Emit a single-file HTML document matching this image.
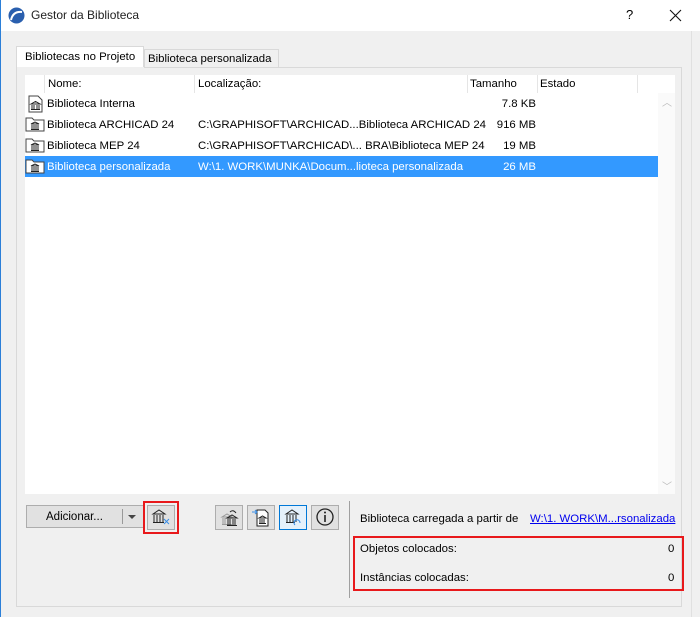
<!DOCTYPE html>
<html><head><style>
*{margin:0;padding:0;box-sizing:border-box}
body{width:700px;height:617px;background:#f0f0f0;font-family:"Liberation Sans",sans-serif;font-size:11.4px;color:#000;position:relative;overflow:hidden}
.a{position:absolute}
.t{white-space:nowrap}
.r{text-align:right;width:60px}
</style></head><body>
<div class="a" style="left:0;top:0;width:700px;height:31px;background:#fff"></div>
<div class="a" style="left:0;top:0;width:1px;height:617px;background:#2b7fd8"></div>
<svg class="a" style="left:8px;top:7px" width="17" height="17" viewBox="0 0 17 17"><circle cx="8.5" cy="8.5" r="8" fill="#2a5fae"/><path d="M3 13 Q5 4 14 5" stroke="#fff" stroke-width="2" fill="none"/></svg>
<div class="a t" style="left:31px;top:8px;font-size:12px;color:#222">Gestor da Biblioteca</div>
<div class="a t" style="left:626px;top:7px;font-size:13px">?</div>
<svg class="a" style="left:669px;top:9px" width="13" height="13" viewBox="0 0 13 13"><path d="M1 1l11 11M12 1L1 12" stroke="#111" stroke-width="1.1"/></svg>

<!-- tabs -->
<div class="a" style="left:16px;top:46px;width:128px;height:22px;background:#fff;border:1px solid #d9d9d9;border-bottom:none"></div>
<div class="a t" style="left:25px;top:51px">Bibliotecas no Projeto</div>
<div class="a" style="left:144px;top:49px;width:135px;height:19px;background:#f0f0f0;border:1px solid #d9d9d9;border-bottom:none"></div>
<div class="a t" style="left:148px;top:53px">Biblioteca personalizada</div>
<div class="a" style="left:16px;top:67px;width:666px;height:540px;border:1px solid #d9d9d9;border-top:none;background:#f0f0f0"></div>
<div class="a" style="left:144px;top:67px;width:538px;height:1px;background:#d9d9d9"></div>

<!-- list -->
<div class="a" style="left:25px;top:75px;width:650px;height:419px;background:#fff"></div>
<div class="a" style="left:658px;top:93px;width:17px;height:401px;background:#fafafa"></div>
<div class="a t" style="left:662px;top:94px;color:#bbb;font-size:10px">︿</div>
<div class="a t" style="left:662px;top:478px;color:#bbb;font-size:10px">﹀</div>
<div class="a" style="left:44px;top:75px;width:1px;height:18px;background:#e5e5e5"></div>
<div class="a" style="left:194px;top:75px;width:1px;height:18px;background:#e5e5e5"></div>
<div class="a" style="left:467px;top:75px;width:1px;height:18px;background:#e5e5e5"></div>
<div class="a" style="left:537px;top:75px;width:1px;height:18px;background:#e5e5e5"></div>
<div class="a" style="left:637px;top:75px;width:1px;height:18px;background:#e5e5e5"></div>
<div class="a t" style="left:48px;top:78px">Nome:</div>
<div class="a t" style="left:198px;top:78px">Localização:</div>
<div class="a t" style="left:470px;top:78px">Tamanho</div>
<div class="a t" style="left:540px;top:78px">Estado</div>

<div class="a" style="left:25px;top:156px;width:633px;height:21px;background:#3399ff"></div>

<svg class="a" style="left:28px;top:95px" width="15" height="18" viewBox="0 0 15 18"><path d="M1 1h9l4 4v12H1z" fill="#fff" stroke="#444"/><path d="M3 9l4.5-2.5L12 9zM4 10v4M6 10v4M9 10v4M11 10v4M3 14.5h9" stroke="#222" fill="none"/></svg>
<svg class="a" style="left:25px;top:117px" width="20" height="15" viewBox="0 0 20 15"><path d="M1 1h6l2 2h10v11H1z" fill="#fff" stroke="#444"/><path d="M6 7l4-2 4 2zM7 8v4M9 8v4M11 8v4M13 8v4M6 12.5h8" stroke="#222" fill="none"/></svg>
<svg class="a" style="left:25px;top:138px" width="20" height="15" viewBox="0 0 20 15"><path d="M1 1h6l2 2h10v11H1z" fill="#fff" stroke="#444"/><path d="M6 7l4-2 4 2zM7 8v4M9 8v4M11 8v4M13 8v4M6 12.5h8" stroke="#222" fill="none"/></svg>
<svg class="a" style="left:25px;top:159px" width="20" height="15" viewBox="0 0 20 15"><path d="M1 1h6l2 2h10v11H1z" fill="#fff" stroke="#444"/><path d="M6 7l4-2 4 2zM7 8v4M9 8v4M11 8v4M13 8v4M6 12.5h8" stroke="#222" fill="none"/></svg>

<div class="a t" style="left:47px;top:98px">Biblioteca Interna</div>
<div class="a t r" style="left:476px;top:98px">7.8 KB</div>
<div class="a t" style="left:47px;top:119px">Biblioteca ARCHICAD 24</div>
<div class="a t" style="left:198px;top:119px">C:\GRAPHISOFT\ARCHICAD...Biblioteca ARCHICAD 24</div>
<div class="a t r" style="left:476px;top:119px">916 MB</div>
<div class="a t" style="left:47px;top:140px">Biblioteca MEP 24</div>
<div class="a t" style="left:198px;top:140px">C:\GRAPHISOFT\ARCHICAD\... BRA\Biblioteca MEP 24</div>
<div class="a t r" style="left:476px;top:140px">19 MB</div>
<div class="a t" style="left:47px;top:161px;color:#fff">Biblioteca personalizada</div>
<div class="a t" style="left:198px;top:161px;color:#fff">W:\1. WORK\MUNKA\Docum...lioteca personalizada</div>
<div class="a t r" style="left:476px;top:161px;color:#fff">26 MB</div>

<!-- bottom buttons -->
<div class="a" style="left:26px;top:505px;width:118px;height:23px;background:#e1e1e1;border:1px solid #adadad"></div>
<div class="a t" style="left:46px;top:511px;font-size:11.5px">Adicionar...</div>
<div class="a" style="left:122px;top:509px;width:1px;height:15px;background:#999"></div>
<div class="a" style="left:128px;top:515px;width:0;height:0;border-left:4px solid transparent;border-right:4px solid transparent;border-top:4px solid #444"></div>

<div class="a" style="left:143px;top:501px;width:36px;height:33px;border:2px solid #e8191b"></div>
<div class="a" style="left:147px;top:505px;width:28px;height:25px;background:#e1e1e1;border:1px solid #adadad"></div>
<svg class="a" style="left:151px;top:508px" width="20" height="18" viewBox="0 0 20 18"><path d="M2 6l6-4 6 4zM3 7v7M6 7v7M9 7v7M12 7v7M2 14.5h11" stroke="#222" fill="none"/><path d="M13 11l5 5M18 11l-5 5" stroke="#3a8ee6"/></svg>

<div class="a" style="left:215px;top:505px;width:28px;height:25px;background:#e1e1e1;border:1px solid #adadad"></div>
<svg class="a" style="left:219px;top:507px" width="20" height="20" viewBox="0 0 20 20"><path d="M3 10l5-3 5 3zM4 11v6M6 11v6M9 11v6M11 11v6M3 17.5h10" stroke="#999" fill="none"/><path d="M8 11l5-3 5 3zM9 12v6M11 12v6M14 12v6M16 12v6M8 18.5h10" stroke="#222" fill="none"/><path d="M11 5q3-3 6 1" stroke="#222" fill="none"/></svg>
<div class="a" style="left:247px;top:505px;width:28px;height:25px;background:#e1e1e1;border:1px solid #adadad"></div>
<svg class="a" style="left:251px;top:507px" width="20" height="20" viewBox="0 0 20 20"><path d="M6 3h8l3 3v13H6z" fill="#fff" stroke="#222"/><path d="M1 5h5M4 3l2 2-2 2" stroke="#3a8ee6" fill="none"/><path d="M8 11l3.5-2 3.5 2zM9 12v4M11 12v4M13 12v4M8 16.5h7" stroke="#222" fill="none"/></svg>
<div class="a" style="left:279px;top:505px;width:28px;height:25px;background:#e5f1fb;border:1px solid #0078d7"></div>
<svg class="a" style="left:283px;top:507px" width="20" height="20" viewBox="0 0 20 20"><path d="M3 7l6-4 6 4zM4 8v7M7 8v7M10 8v7M13 8v7M3 15.5h9" stroke="#222" fill="none"/><path d="M12 18a3 3 0 1 1 5 -2" stroke="#3a8ee6" fill="none"/></svg>
<div class="a" style="left:311px;top:505px;width:28px;height:25px;background:#e1e1e1;border:1px solid #adadad"></div>
<svg class="a" style="left:315px;top:507px" width="20" height="20" viewBox="0 0 20 20"><circle cx="10" cy="10" r="8" fill="none" stroke="#222" stroke-width="1.3"/><path d="M10 8v7" stroke="#222" stroke-width="1.6"/><circle cx="10" cy="5.5" r="1" fill="#222"/></svg>

<div class="a" style="left:349px;top:501px;width:1px;height:97px;background:#a0a0a0"></div>
<div class="a t" style="left:360px;top:513px">Biblioteca carregada a partir de</div>
<div class="a t" style="left:530px;top:513px;color:#0000ee;text-decoration:underline">W:\1. WORK\M...rsonalizada</div>
<div class="a" style="left:353px;top:536px;width:331px;height:55px;border:2px solid #e8191b"></div>
<div class="a t" style="left:360px;top:543px">Objetos colocados:</div>
<div class="a t" style="left:668px;top:543px">0</div>
<div class="a t" style="left:360px;top:572px">Instâncias colocadas:</div>
<div class="a t" style="left:668px;top:572px">0</div>

<div class="a" style="left:691px;top:31px;width:1px;height:586px;background:#e0e0e0"></div>
</body></html>
